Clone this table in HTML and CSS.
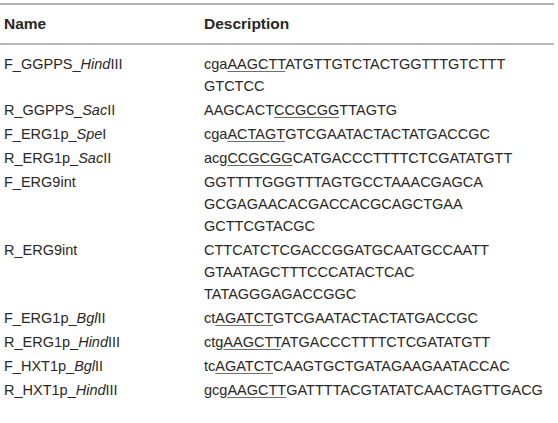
FILE: index.html
```html
<!DOCTYPE html>
<html>
<head>
<meta charset="utf-8">
<link rel="stylesheet" href="styles.css">
</head>
<body>
<div class="tbl">
  <div class="head">
    <div class="cell">Name</div>
    <div class="cell">Description</div>
  </div>
  <div class="rows">
    <div class="row"><div class="cell">F_GGPPS_<i>Hind</i>III</div><div class="cell">cga<u>AAGCTT</u>ATGTTGTCTACTGGTTTGTCTTT<br>GTCTCC</div></div>
    <div class="row"><div class="cell">R_GGPPS_<i>Sac</i>II</div><div class="cell">AAGCACT<u>CCGCGG</u>TTAGTG</div></div>
    <div class="row"><div class="cell">F_ERG1p_<i>Spe</i>I</div><div class="cell">cga<u>ACTAGT</u>GTCGAATACTACTATGACCGC</div></div>
    <div class="row"><div class="cell">R_ERG1p_<i>Sac</i>II</div><div class="cell">acg<u>CCGCGG</u>CATGACCCTTTTCTCGATATGTT</div></div>
    <div class="row"><div class="cell">F_ERG9int</div><div class="cell">GGTTTTGGGTTTAGTGCCTAAACGAGCA<br>GCGAGAACACGACCACGCAGCTGAA<br>GCTTCGTACGC</div></div>
    <div class="row"><div class="cell">R_ERG9int</div><div class="cell">CTTCATCTCGACCGGATGCAATGCCAATT<br>GTAATAGCTTTCCCATACTCAC<br>TATAGGGAGACCGGC</div></div>
    <div class="row"><div class="cell">F_ERG1p_<i>Bgl</i>II</div><div class="cell">ct<u>AGATCT</u>GTCGAATACTACTATGACCGC</div></div>
    <div class="row"><div class="cell">R_ERG1p_<i>Hind</i>III</div><div class="cell">ctg<u>AAGCTT</u>ATGACCCTTTTCTCGATATGTT</div></div>
    <div class="row"><div class="cell">F_HXT1p_<i>Bgl</i>II</div><div class="cell">tc<u>AGATCT</u>CAAGTGCTGATAGAAGAATACCAC</div></div>
    <div class="row"><div class="cell">R_HXT1p_<i>Hind</i>III</div><div class="cell">gcg<u>AAGCTT</u>GATTTTACGTATATCAACTAGTTGACG</div></div>
  </div>
</div>
</body>
</html>
```

FILE: styles.css
```css
html, body {
  margin: 0;
  padding: 0;
  background: #ffffff;
}
body {
  font-family: "Liberation Sans", Arial, sans-serif;
  font-size: 14.5px;
  color: #2a2727;
}
.tbl {
  margin-top: 3px;
  width: 554px;
  border-top: 2px solid #b3b3b3;
}
.head {
  display: grid;
  grid-template-columns: 200px 1fr;
  align-items: center;
  height: 38px;
  border-bottom: 2px solid #b8b8b8;
  font-weight: bold;
  font-size: 15.5px;
}
.cell {
  padding-left: 4px;
  white-space: nowrap;
}
.rows {
  padding-top: 7px;
}
.row {
  display: grid;
  grid-template-columns: 200px 1fr;
  padding: 1px 0;
  line-height: 22px;
}
u {
  text-decoration: underline;
  text-decoration-color: #6d6d6d;
  text-underline-offset: 2px;
  text-decoration-thickness: 1px;
}
i {
  font-style: italic;
}
```
